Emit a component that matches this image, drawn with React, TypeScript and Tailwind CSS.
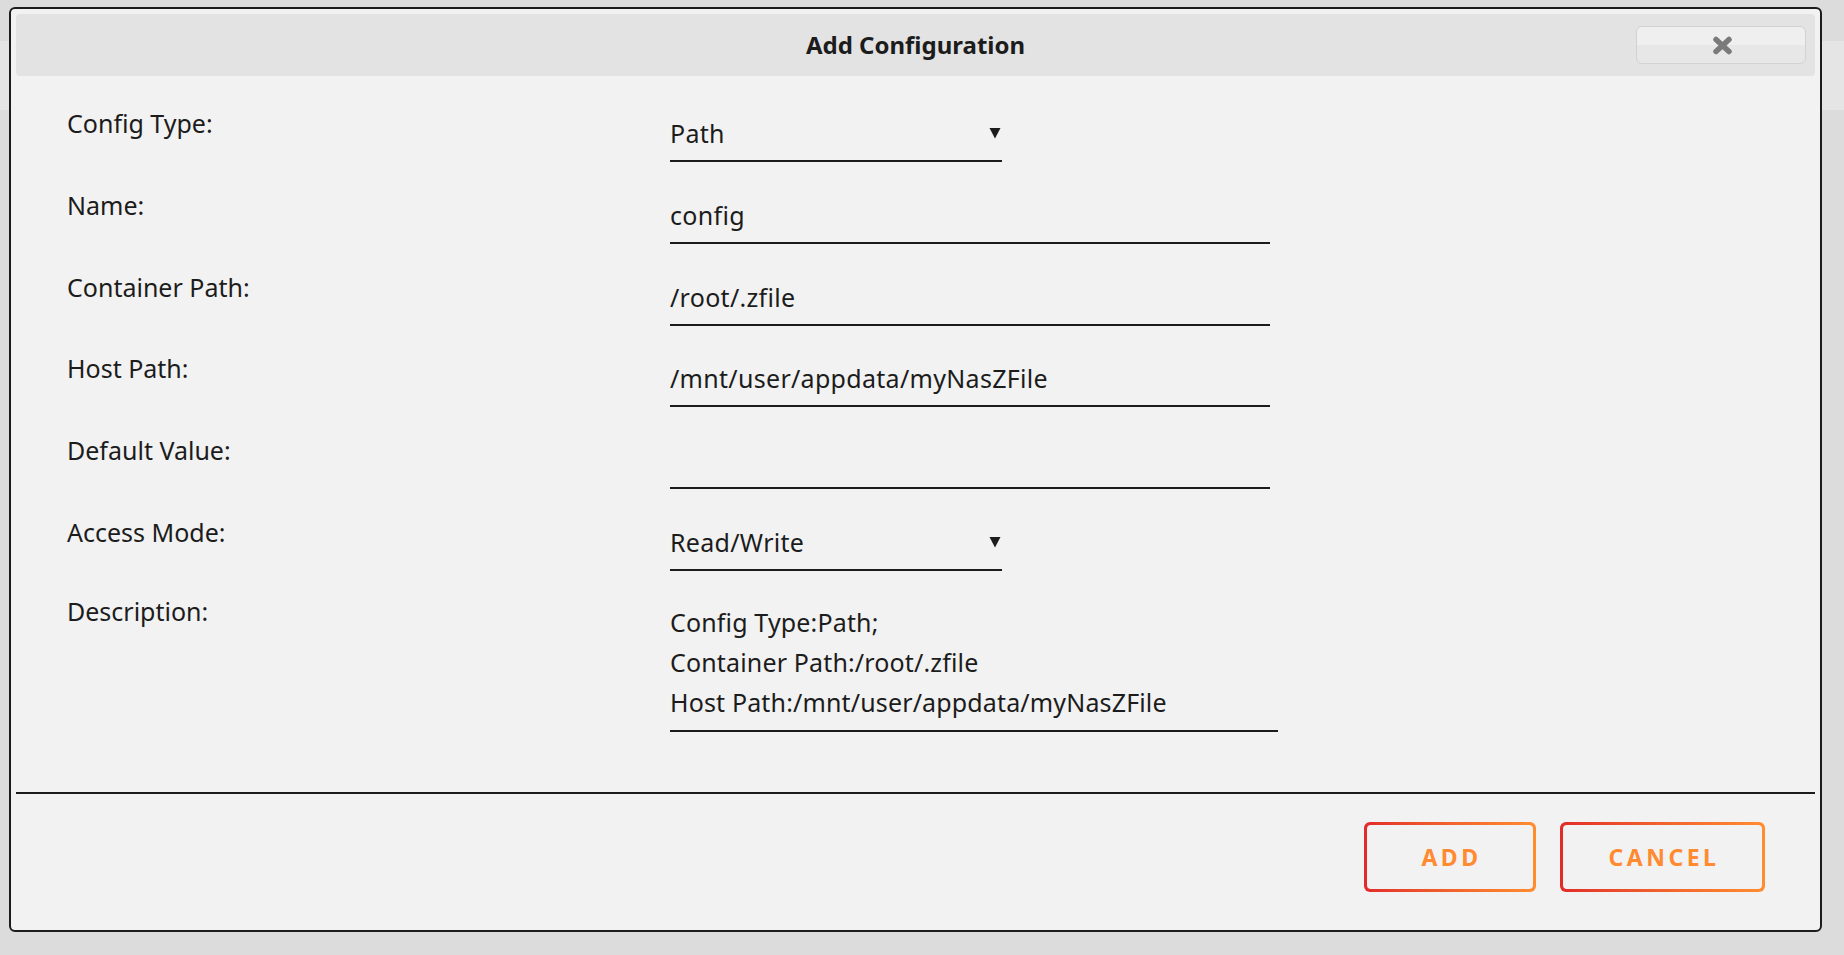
import React from "react";

type Field = {
    label: string;
    value: string;
    select?: boolean;
};

const fields: Field[] = [
    { label: "Config Type:", value: "Path", select: true },
    { label: "Name:", value: "config" },
    { label: "Container Path:", value: "/root/.zfile" },
    { label: "Host Path:", value: "/mnt/user/appdata/myNasZFile" },
    { label: "Default Value:", value: "" },
    { label: "Access Mode:", value: "Read/Write", select: true },
];

const description = [
    "Config Type:Path;",
    "Container Path:/root/.zfile",
    "Host Path:/mnt/user/appdata/myNasZFile",
];

const CloseIcon = () => (
    <svg width="21" height="19" viewBox="0 0 21 19" fill="none">
        <path
            d="M4 3.5L17 15.5M17 3.5L4 15.5"
            stroke="#7a7a7a"
            strokeWidth="5.5"
            strokeLinecap="round"
        />
    </svg>
);

const Caret = () => (
    <svg width="12" height="12" viewBox="0 0 12 12">
        <path d="M0.5 1H11.5L6 11.5Z" fill="#1c1c1c" />
    </svg>
);

const OutlineButton = ({ label, width }: { label: string; width: string }) => (
    <button
        className={`h-[70px] ${width} rounded-[6px] bg-gradient-to-r from-[#e22a2a] to-[#ff8d2f] p-[3px]`}
    >
        <span className="flex h-full w-full items-center justify-center rounded-[4px] bg-[#f2f2f2] pl-[3px] text-[23px] font-bold tracking-[3.5px] text-[#ff8a30]">
            {label}
        </span>
    </button>
);

const FieldRow = ({ field }: { field: Field }) => (
    <div className="grid h-[81.75px] grid-cols-[603px_1fr]">
        <div className="pt-[8px] leading-[30px]">{field.label}</div>
        <div>
            <div
                className={`relative h-[62px] border-b-2 border-[#1c1c1c] pt-[18px] leading-[30px] tracking-[0.3px] ${
                    field.select ? "w-[332px]" : "w-[600px]"
                }`}
            >
                {field.value}
                {field.select && (
                    <span className="absolute right-[1px] top-[27px]">
                        <Caret />
                    </span>
                )}
            </div>
        </div>
    </div>
);

export default function App() {
    return (
        <div className="relative h-[955px] w-full overflow-hidden bg-[#dcdcdc] font-['Noto_Sans',sans-serif] text-[25px] text-[#1c1c1c]">
            {/* page behind the overlay */}
            <div className="mt-[41px] h-[69px] bg-[#e5e5e5]" />

            <div className="absolute left-[9px] top-[7px] h-[925px] w-[1813px] rounded-[6px] border-2 border-[#1c1c1c] bg-[#f2f2f2] p-[5px]">
                <div className="relative flex h-[62px] items-center justify-center rounded-[4px] bg-[#e3e3e3]">
                    <h1 className="text-[24px] font-bold">Add Configuration</h1>
                    <button className="absolute right-[9px] top-[12px] flex h-[38px] w-[170px] items-center justify-center rounded-[6px] border border-[#d2d2d2] bg-[linear-gradient(to_bottom,#efefef_50%,#e7e7e7_50%)] pl-[2px]">
                        <CloseIcon />
                    </button>
                </div>

                <div className="pl-[51px] pt-[24px]">
                    {fields.map((f) => (
                        <FieldRow key={f.label} field={f} />
                    ))}
                    <div className="grid grid-cols-[603px_1fr] pt-[1.5px]">
                        <div className="pt-[4px] leading-[30px]">Description:</div>
                        <div className="w-[608px] border-b-2 border-[#1c1c1c] pb-[8px] pt-[10px] leading-[40px] tracking-[0.15px]">
                            {description.map((line) => (
                                <div key={line}>{line}</div>
                            ))}
                        </div>
                    </div>
                </div>

                <div className="mt-[60px] h-[2px] bg-[#1c1c1c]" />

                <div className="flex justify-end gap-[24px] pr-[50px] pt-[28px]">
                    <OutlineButton label="ADD" width="w-[172px]" />
                    <OutlineButton label="CANCEL" width="w-[205px]" />
                </div>
            </div>
        </div>
    );
}
